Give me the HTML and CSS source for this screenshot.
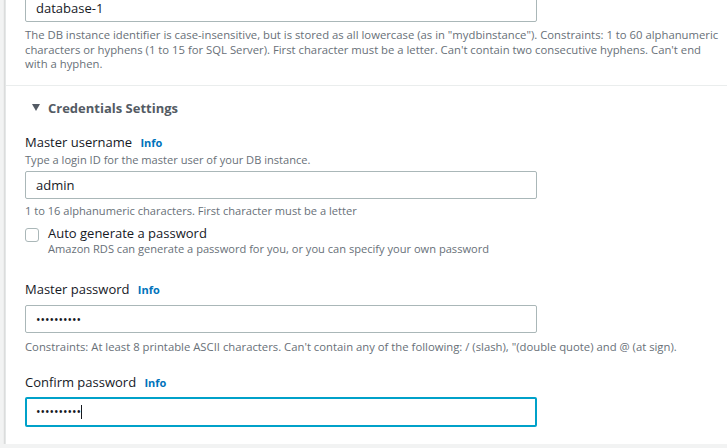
FILE: index.html
```html
<!DOCTYPE html>
<html>
<head>
<meta charset="utf-8">
<link rel="stylesheet" href="styles.css">
</head>
<body>
<div class="card">
  <div class="section top">
    <div class="input"><span class="val">database-1</span></div>
    <p class="desc wide">The DB instance identifier is case-insensitive, but is stored as all lowercase (as in "mydbinstance"). Constraints: 1 to 60 alphanumeric<br>characters or hyphens (1 to 15 for SQL Server). First character must be a letter. Can't contain two consecutive hyphens. Can't end<br>with a hyphen.</p>
  </div>
  <div class="section creds">
    <div class="exp"><span class="tri"></span><span class="exp-title">Credentials Settings</span></div>

    <div class="field">
      <div class="label">Master username <span class="info">Info</span></div>
      <p class="desc hint">Type a login ID for the master user of your DB instance.</p>
      <div class="input"><span class="val">admin</span></div>
      <p class="desc after">1 to 16 alphanumeric characters. First character must be a letter</p>
      <div class="check">
        <span class="box"></span>
        <div>
          <div class="check-label">Auto generate a password</div>
          <p class="desc">Amazon RDS can generate a password for you, or you can specify your own password</p>
        </div>
      </div>
    </div>

    <div class="field pw">
      <div class="label">Master password <span class="info">Info</span></div>
      <div class="input"><span class="dots">••••••••••</span></div>
      <p class="desc wide after pw-after">Constraints: At least 8 printable ASCII characters. Can't contain any of the following: / (slash), "(double quote) and @ (at sign).</p>
    </div>

    <div class="field cpw">
      <div class="label">Confirm password <span class="info">Info</span></div>
      <div class="input focus"><span class="dots">••••••••••</span><span class="caret"></span></div>
    </div>
  </div>
</div>
</body>
</html>
```

FILE: styles.css
```css
html, body {
  margin: 0;
  padding: 0;
  background: #f2f3f3;
  font-family: "Open Sans", "Noto Sans", sans-serif;
  color: #16191f;
  overflow: hidden;
}
.card {
  margin: -10px 0 0 5px;
  background: #fff;
  border-left: 1px solid #e4e7e7;
  box-shadow: 0 1px 2px 0 rgba(0, 0, 0, 0.3);
  padding-bottom: 17px;
}
.section {
  padding: 0 20px 0 19px;
}
.top {
  padding-top: 4px;
  padding-bottom: 13px;
  border-bottom: 1px solid #eaeded;
}
.input {
  width: 500px;
  height: 26px;
  border: 1px solid #aab7b8;
  border-radius: 2px;
  display: flex;
  align-items: center;
  padding-left: 10px;
  font-size: 13px;
  color: #16191f;
  box-sizing: content-box;
}
.input.focus {
  border: 2px solid #00a1c9;
  width: 499px;
  height: 26px;
  padding-left: 9px;
}
.desc {
  margin: 0;
  font-size: 11.1px;
  line-height: 14.5px;
  color: #687078;
}
.desc.wide {
  font-size: 11.3px;
  white-space: nowrap;
}
.top .desc {
  margin-top: 6px;
}
.creds {
  padding-top: 13px;
}
.exp {
  display: flex;
  align-items: center;
  padding-left: 7px;
  height: 18px;
}
.tri {
  width: 0;
  height: 0;
  border-left: 4.5px solid transparent;
  border-right: 4.5px solid transparent;
  border-top: 7px solid #545b64;
  margin-right: 8px;
}
.exp-title {
  font-size: 13px;
  font-weight: 700;
  color: #545b64;
}
.field {
  margin-top: 16px;
}
.label {
  font-size: 13px;
  line-height: 18px;
  color: #16191f;
}
.info {
  font-size: 11px;
  font-weight: 700;
  color: #0073bb;
  margin-left: 5px;
}
.hint {
  margin-top: 1px;
  margin-bottom: 4px;
}
.after {
  margin-top: 5px;
}
.check {
  display: flex;
  align-items: flex-start;
  margin-top: 5px;
}
.box {
  width: 12px;
  height: 12px;
  border: 1px solid #aab7b8;
  border-radius: 3px;
  margin: 4px 9px 0 0;
  flex: none;
}
.check-label {
  font-size: 13px;
  line-height: 18px;
}
.pw {
  margin-top: 24px;
}
.pw .label {
  margin-bottom: 6px;
}
.pw-after {
  margin-top: 7px;
}
.cpw {
  margin-top: 18px;
}
.cpw .label {
  margin-bottom: 5px;
}
.dots {
  font-size: 12px;
  letter-spacing: 0;
  color: #16191f;
}
.caret {
  width: 1px;
  height: 14px;
  background: #16191f;
  margin-left: 0;
}
```
